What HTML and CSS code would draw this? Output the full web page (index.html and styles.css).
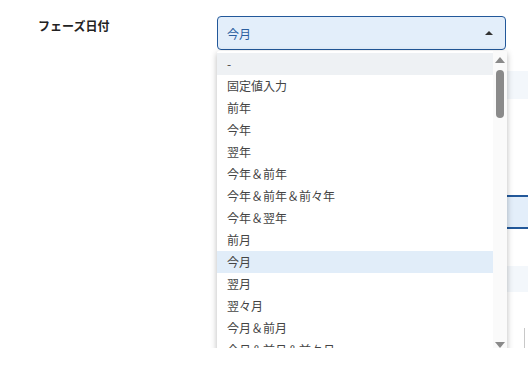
FILE: index.html
```html
<!DOCTYPE html>
<html lang="ja">
<head>
  <meta charset="UTF-8">
  <title>フェーズ日付</title>
  <link rel="stylesheet" href="styles.css">
</head>
<body>
  <div class="form">
    <div class="form-row">
      <div class="form-label">フェーズ日付</div>
      <div class="form-field">
        <div class="select open">
          <span class="select-value">今月</span>
          <span class="select-caret"></span>
        </div>

        <!-- 開いているドロップダウン -->
        <div class="dropdown">
          <ul class="option-list">
            <li class="option hover">-</li>
            <li class="option">固定値入力</li>
            <li class="option">前年</li>
            <li class="option">今年</li>
            <li class="option">翌年</li>
            <li class="option">今年＆前年</li>
            <li class="option">今年＆前年＆前々年</li>
            <li class="option">今年＆翌年</li>
            <li class="option">前月</li>
            <li class="option selected">今月</li>
            <li class="option">翌月</li>
            <li class="option">翌々月</li>
            <li class="option">今月＆前月</li>
            <li class="option">今月＆前月＆前々月</li>
          </ul>
          <div class="scrollbar">
            <span class="scroll-arrow up"></span>
            <span class="scroll-track"><span class="scroll-thumb"></span></span>
            <span class="scroll-arrow down"></span>
          </div>
        </div>
      </div>
    </div>

    <!-- ドロップダウンの後ろにある行 -->
    <div class="back-rows">
      <div class="back-row shade"></div>
      <div class="back-row plain"></div>
      <div class="back-row boxed"></div>
      <div class="back-row shade small"></div>
      <div class="back-row edge"></div>
    </div>
  </div>
</body>
</html>
```

FILE: styles.css
```css
body {
  margin: 0;
  font-family: "Noto Sans CJK JP", "Noto Sans", sans-serif;
  color: #333;
  background: #ffffff;
  overflow: hidden;
}

.form {
  padding-top: 16px;
}

.form-row {
  display: flex;
}

.form-label {
  width: 179px;
  padding-left: 38px;
  padding-top: 1px;
  font-size: 12px;
  font-weight: bold;
  color: #222;
}

.form-field {
  position: relative;
  width: 289px;
}

.select {
  display: flex;
  align-items: center;
  justify-content: space-between;
  height: 32px;
  padding: 0 12px 0 9px;
  border: 1px solid #22589a;
  border-radius: 4px;
  background-color: #e3eefa;
}

.select-value {
  font-size: 12px;
  color: #2b5e9f;
}

.select-caret {
  width: 0;
  height: 0;
  border-left: 4px solid transparent;
  border-right: 4px solid transparent;
  border-bottom: 4px solid #333;
}

.dropdown {
  position: absolute;
  top: 35px;
  left: 0;
  z-index: 2;
  display: flex;
  width: 290px;
  height: 303px;
  background-color: #ffffff;
  border-radius: 2px;
  box-shadow: 0 2px 6px rgba(0, 0, 0, 0.28);
  overflow: hidden;
}

.option-list {
  flex: 1;
  list-style: none;
  margin: 0;
  padding: 2px 0 0;
}

.option {
  height: 22px;
  line-height: 22px;
  padding-left: 10px;
  font-size: 12px;
  color: #444;
  white-space: nowrap;
}

.option.hover {
  background-color: #eef1f4;
}

.option.selected {
  background-color: #e1edf9;
}

.scrollbar {
  display: flex;
  flex-direction: column;
  align-items: center;
  width: 14px;
  background-color: #fafafa;
}

.scroll-arrow {
  width: 0;
  height: 0;
  border-left: 5px solid transparent;
  border-right: 5px solid transparent;
}

.scroll-arrow.up {
  margin-top: 6px;
  border-bottom: 6px solid #8a8a8a;
}

.scroll-arrow.down {
  margin-bottom: 6px;
  border-top: 6px solid #8a8a8a;
}

.scroll-track {
  flex: 1;
  padding-top: 7px;
}

.scroll-thumb {
  display: block;
  width: 8px;
  height: 48px;
  border-radius: 4px;
  background-color: #8a8a8a;
}

.back-rows {
  display: flex;
  flex-direction: column;
  margin-left: 217px;
  margin-top: 2px;
}

.back-row {
  width: 320px;
}

.back-row.shade {
  height: 28px;
  margin-top: 19px;
  background-color: #f3f7fb;
}

.back-row.plain {
  height: 96px;
}

.back-row.boxed {
  height: 30px;
  border-top: 2px solid #22589a;
  border-bottom: 2px solid #22589a;
  background-color: #e3eefa;
}

.back-row.shade.small {
  height: 26px;
  margin-top: 37px;
}

.back-row.edge {
  height: 20px;
  margin-top: 36px;
  margin-left: -1px;
  width: 308px;
  border-right: 1px solid #c8c8c8;
}
```
